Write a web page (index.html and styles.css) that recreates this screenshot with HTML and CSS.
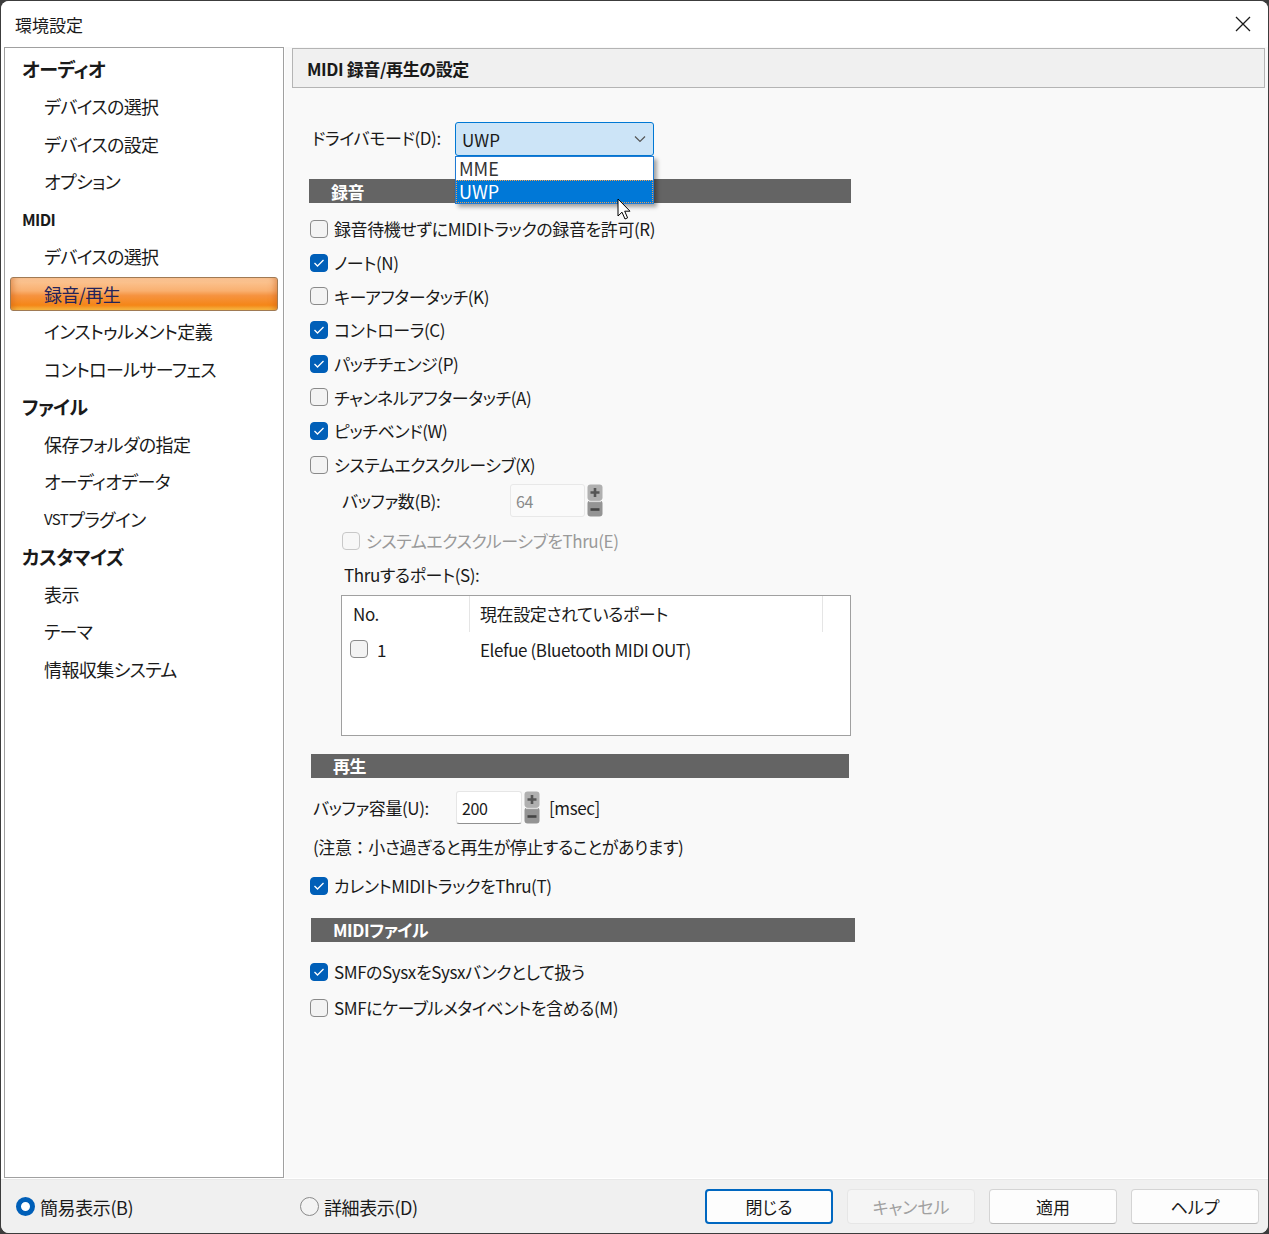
FILE: index.html
```html
<!DOCTYPE html>
<html>
<head>
    <title>環境設定</title>
    <link rel="stylesheet" href="styles.css">
</head>
<body>

<div class="window">
    <div class="titlebar">
        <span class="title">環境設定</span>
        <svg class="close" width="16" height="16" viewBox="0 0 16 16"><path d="M1 1L15 15M15 1L1 15" stroke="#1a1a1a" stroke-width="1.3" fill="none"/></svg>
    </div>

    <div class="main">
        <div class="sidebar">
            <div class="cat">オーディオ</div>
            <div class="item">デバイスの選択</div>
            <div class="item">デバイスの設定</div>
            <div class="item">オプション</div>
            <div class="cat cat-small">MIDI</div>
            <div class="item">デバイスの選択</div>
            <div class="item selected">録音/再生</div>
            <div class="item">インストゥルメント定義</div>
            <div class="item">コントロールサーフェス</div>
            <div class="cat">ファイル</div>
            <div class="item">保存フォルダの指定</div>
            <div class="item">オーディオデータ</div>
            <div class="item"><span class="vst">VST</span>プラグイン</div>
            <div class="cat">カスタマイズ</div>
            <div class="item">表示</div>
            <div class="item">テーマ</div>
            <div class="item">情報収集システム</div>
        </div>

        <div class="panel">
            <div class="panel-head">MIDI 録音/再生の設定</div>

            <div class="body">
                <div class="driver-row">
                    <span class="label">ドライバモード(D):</span>
                    <div class="select">
                        <span>UWP</span>
                        <svg width="12" height="8" viewBox="0 0 12 8"><path d="M1 1.5L6 6.5L11 1.5" stroke="#555" stroke-width="1.2" fill="none"/></svg>
                        <div class="dropdown">
                            <div class="opt">MME</div>
                            <div class="opt active">UWP</div>
                        </div>
                        <svg class="cursor" width="16" height="24" viewBox="0 0 16 24"><path d="M1 1L1 18L5 14.2L8 21L10.6 19.8L7.7 13.2L13 13.2Z" fill="#fff" stroke="#000" stroke-width="1"/></svg>
                    </div>
                </div>

                <div class="bar bar-rec">録音</div>

                <div class="checks">
                    <div class="check"><span class="box"></span>録音待機せずにMIDIトラックの録音を許可(R)</div>
                    <div class="check"><span class="box on"><svg width="12" height="10" viewBox="0 0 12 10"><path d="M1.5 5L4.5 8L10.5 2" stroke="#fff" stroke-width="1.3" fill="none"/></svg></span>ノート(N)</div>
                    <div class="check"><span class="box"></span>キーアフタータッチ(K)</div>
                    <div class="check"><span class="box on"><svg width="12" height="10" viewBox="0 0 12 10"><path d="M1.5 5L4.5 8L10.5 2" stroke="#fff" stroke-width="1.3" fill="none"/></svg></span>コントローラ(C)</div>
                    <div class="check"><span class="box on"><svg width="12" height="10" viewBox="0 0 12 10"><path d="M1.5 5L4.5 8L10.5 2" stroke="#fff" stroke-width="1.3" fill="none"/></svg></span>パッチチェンジ(P)</div>
                    <div class="check"><span class="box"></span>チャンネルアフタータッチ(A)</div>
                    <div class="check"><span class="box on"><svg width="12" height="10" viewBox="0 0 12 10"><path d="M1.5 5L4.5 8L10.5 2" stroke="#fff" stroke-width="1.3" fill="none"/></svg></span>ピッチベンド(W)</div>
                    <div class="check"><span class="box"></span>システムエクスクルーシブ(X)</div>
                </div>

                <div class="sub">
                    <div class="spin-row buf-row">
                        <span class="label buf-label">バッファ数(B):</span>
                        <div class="input disabled">64</div>
                        <svg class="spin" width="16" height="33" viewBox="0 0 16 33">
                            <rect x="0.5" y="0.5" width="15" height="16" rx="3" fill="#b0b0b0"/>
                            <path d="M3.5 8.5H12.5M8 4V13" stroke="#555" stroke-width="2.6"/>
                            <rect x="0.5" y="16.5" width="15" height="16" rx="3" fill="#949494"/>
                            <path d="M2 17.5H14" stroke="#dcdcdc" stroke-width="1.2"/>
                            <path d="M3.5 25.5H12.5" stroke="#444" stroke-width="2.6"/>
                        </svg>
                    </div>
                    <div class="check dim sysx-thru"><span class="box"></span>システムエクスクルーシブをThru(E)</div>
                    <div class="thru-label">Thruするポート(S):</div>
                    <div class="ports">
                        <div class="ports-head">
                            <span class="col-no">No.</span>
                            <span class="col-port">現在設定されているポート</span>
                            <span class="col-end"></span>
                        </div>
                        <div class="ports-row">
                            <span class="col-no"><span class="box"></span>1</span>
                            <span class="col-port">Elefue (Bluetooth MIDI OUT)</span>
                        </div>
                    </div>
                </div>

                <div class="bar bar-play">再生</div>

                <div class="spin-row cap-row">
                    <span class="label cap-label">バッファ容量(U):</span>
                    <div class="input cap-input">200</div>
                    <svg class="spin" width="16" height="33" viewBox="0 0 16 33">
                        <rect x="0.5" y="0.5" width="15" height="16" rx="3" fill="#b0b0b0"/>
                        <path d="M3.5 8.5H12.5M8 4V13" stroke="#555" stroke-width="2.6"/>
                        <rect x="0.5" y="16.5" width="15" height="16" rx="3" fill="#949494"/>
                        <path d="M2 17.5H14" stroke="#dcdcdc" stroke-width="1.2"/>
                        <path d="M3.5 25.5H12.5" stroke="#444" stroke-width="2.6"/>
                    </svg>
                    <span class="unit">[msec]</span>
                </div>
                <div class="note">(注意<span class="wide">：</span>小さ過ぎると再生が停止することがあります)</div>
                <div class="check thru-check"><span class="box on"><svg width="12" height="10" viewBox="0 0 12 10"><path d="M1.5 5L4.5 8L10.5 2" stroke="#fff" stroke-width="1.3" fill="none"/></svg></span>カレントMIDIトラックをThru(T)</div>

                <div class="bar bar-file">MIDIファイル</div>

                <div class="check smf-1"><span class="box on"><svg width="12" height="10" viewBox="0 0 12 10"><path d="M1.5 5L4.5 8L10.5 2" stroke="#fff" stroke-width="1.3" fill="none"/></svg></span>SMFのSysxをSysxバンクとして扱う</div>
                <div class="check smf-2"><span class="box"></span>SMFにケーブルメタイベントを含める(M)</div>
            </div>
        </div>
    </div>

    <div class="footer">
        <div class="radio radio-simple"><span class="dot on"></span>簡易表示(B)</div>
        <div class="radio radio-detail"><span class="dot"></span>詳細表示(D)</div>
        <div class="buttons">
            <button class="focused">閉じる</button>
            <button class="disabled">キャンセル</button>
            <button>適用</button>
            <button>ヘルプ</button>
        </div>
    </div>
</div>

</body>
</html>
```

FILE: styles.css
```css
html, body {
    margin: 0;
    padding: 0;
    background-color: #3c3c3c;
}

body {
    font-family: "Noto Sans CJK JP", "Noto Sans", sans-serif;
    font-feature-settings: "palt";
    color: #1a1a1a;
    font-size: 17px;
    letter-spacing: -0.4px;
}

.window {
    width: 1267px;
    height: 1232px;
    margin: 1px;
    border-radius: 8px;
    overflow: hidden;
    background-color: #f0f0f0;
    display: flex;
    flex-direction: column;
}

.titlebar {
    height: 46px;
    flex: none;
    background-color: #fff;
    display: flex;
    align-items: center;
    justify-content: space-between;
    padding: 0 17px 0 14px;
    letter-spacing: 0;
}

.title {
    font-size: 17px;
}

.main {
    display: flex;
    height: 1132px;
    background-color: #fff;
}

/* sidebar */
.sidebar {
    width: 280px;
    margin-left: 3px;
    border: 1px solid #a0a0a0;
    background-color: #fff;
    padding-top: 2px;
    box-sizing: border-box;
    height: 1131px;
    letter-spacing: -0.6px;
}

.cat, .item {
    height: 37.5px;
    display: flex;
    align-items: center;
    font-size: 18px;
}

.cat {
    padding-left: 17px;
    font-weight: bold;
    font-size: 19px;
}

.cat-small {
    font-size: 16px;
}

.item {
    padding-left: 39px;
}

.vst {
    font-size: 15px;
}

.item.selected {
    height: 33.5px;
    margin: 2px 5px;
    padding-left: 33px;
    border: 1px solid #a07a54;
    border-radius: 3px;
    box-sizing: border-box;
    color: #23235a;
    background: linear-gradient(to bottom, #fcc99a 0%, #f9b070 40%, #f69340 55%, #f58617 85%, #f8c048 100%);
    box-shadow: inset 6px 0 6px -4px rgba(200, 90, 20, 0.5), inset -6px 0 6px -4px rgba(200, 90, 20, 0.5);
}

/* panel */
.panel {
    flex: 1;
    background-color: #f9f9f9;
    margin-left: 1px;
    height: 1131px;
}

.panel-head {
    height: 40px;
    margin: 1px 3px 0 7px;
    box-sizing: border-box;
    border: 1px solid #b4b4b4;
    background-color: #f0f0f0;
    display: flex;
    align-items: center;
    padding-left: 14px;
    font-weight: bold;
    font-size: 17px;
}

.body {
    padding-left: 27px;
}

.label {
    font-size: 17px;
}

.driver-row {
    margin-top: 34px;
    height: 34px;
    display: flex;
    align-items: center;
}

.driver-row .label {
    width: 143px;
    margin-top: -3px;
}

.select {
    position: relative;
    width: 199px;
    height: 34px;
    box-sizing: border-box;
    border: 1px solid #0078d4;
    border-radius: 3px;
    background-color: #cce4f7;
    display: flex;
    align-items: center;
    justify-content: space-between;
    padding: 0 7px 0 6px;
    font-size: 17px;
    letter-spacing: 0;
}

.dropdown {
    position: absolute;
    left: -1px;
    top: 33px;
    width: 199px;
    height: 48px;
    box-sizing: border-box;
    border: 1px solid #1f7ad4;
    background-color: #fff;
    box-shadow: 3px 3px 4px rgba(0, 0, 0, 0.35);
    z-index: 2;
}

.opt {
    height: 23px;
    line-height: 23px;
    padding-left: 3px;
    font-size: 18px;
    color: #333;
}

.opt.active {
    background-color: #0078d7;
    color: #fff;
    outline: 1px dotted #f0a050;
    outline-offset: -1px;
}

.cursor {
    position: absolute;
    left: 161px;
    top: 75px;
    z-index: 3;
}

.bar {
    height: 24px;
    background-color: #646464;
    color: #fff;
    font-weight: bold;
    font-size: 17px;
    display: flex;
    align-items: center;
    padding-left: 22px;
    box-sizing: border-box;
}

.bar-rec {
    margin-top: 23px;
    margin-left: -3px;
    width: 542px;
}

.checks {
    margin-top: 9px;
    margin-left: -2px;
}

.check {
    height: 33.7px;
    display: flex;
    align-items: center;
    font-size: 17px;
}

.box {
    width: 18px;
    height: 18px;
    box-sizing: border-box;
    border: 1px solid #8a8a8a;
    border-radius: 4px;
    background-color: #f3f3f3;
    margin-right: 6px;
    display: inline-flex;
    align-items: center;
    justify-content: center;
    flex: none;
}

.box.on {
    border-color: #005fb8;
    background-color: #005fb8;
}

/* system exclusive sub options */
.sub {
    padding-left: 30px;
}

.spin-row {
    display: flex;
    align-items: center;
    height: 34px;
}

.buf-row {
    margin-top: 2px;
}

.buf-label {
    width: 168px;
}

.input {
    width: 75px;
    height: 33px;
    box-sizing: border-box;
    padding-left: 5px;
    display: flex;
    align-items: center;
    font-size: 16px;
    background-color: #fff;
    border: 1px solid #e6e6e6;
    border-bottom-color: #909090;
    border-radius: 3px;
}

.input.disabled {
    background-color: #fafafa;
    border-color: #e8e8e8;
    color: #8a8a8a;
}

.spin {
    margin-left: 2px;
}

.check.dim {
    color: #9a9a9a;
}

.check.dim .box {
    border-color: #c8c8c8;
    background-color: #f7f7f7;
}

.sysx-thru {
    height: 30px;
    margin-top: 8px;
}

.thru-label {
    height: 30px;
    margin-top: 4px;
    margin-left: 2px;
    display: flex;
    align-items: center;
}

.ports {
    margin-top: 5px;
    margin-left: -1px;
    width: 510px;
    height: 141px;
    box-sizing: border-box;
    border: 1px solid #a0a0a0;
    background-color: #fff;
    font-size: 17px;
}

.ports-head, .ports-row {
    display: flex;
    height: 35px;
    align-items: center;
}

.ports-head {
    height: 36px;
}

.col-no {
    width: 128px;
    box-sizing: border-box;
    padding-left: 11px;
    display: flex;
    align-items: center;
    align-self: stretch;
}

.ports-head .col-no, .ports-head .col-port {
    border-right: 1px solid #e5e5e5;
}

.col-port {
    width: 354px;
    box-sizing: border-box;
    padding-left: 10px;
    display: flex;
    align-items: center;
    align-self: stretch;
}

.ports-head .col-port {
    width: 353px;
}

.ports-row .col-no {
    padding-left: 8px;
}

.ports-row .box {
    margin-right: 9px;
}

.bar-play {
    margin-top: 18px;
    margin-left: -1px;
    width: 538px;
}

.cap-row {
    margin-top: 13px;
}

.cap-label {
    width: 143px;
    margin-left: 1px;
}

.cap-input {
    width: 66px;
    border-color: #e6e6e6;
    border-bottom-color: #909090;
}

.unit {
    margin-left: 9px;
}

.note {
    height: 30px;
    margin-top: 7px;
    margin-left: 1px;
    display: flex;
    align-items: center;
}

.wide {
    font-feature-settings: normal;
}

.thru-check {
    height: 30px;
    margin-top: 9px;
    margin-left: -2px;
}

.bar-file {
    margin-top: 17px;
    margin-left: -1px;
    width: 544px;
}

.smf-1 {
    height: 30px;
    margin-top: 15px;
    margin-left: -2px;
}

.smf-2 {
    height: 30px;
    margin-top: 6px;
    margin-left: -2px;
}

/* footer */
.footer {
    flex: 1;
    display: flex;
    align-items: center;
    background-color: #f0f0f0;
    padding-left: 15px;
    font-size: 18px;
    border-top: 1px solid #e8e8e8;
}

.radio {
    display: flex;
    align-items: center;
}

.radio-simple {
    width: 284px;
}

.dot {
    width: 19px;
    height: 19px;
    border-radius: 50%;
    box-sizing: border-box;
    border: 1px solid #8a8a8a;
    background-color: #f3f3f3;
    margin-right: 5px;
}

.dot.on {
    border: 5px solid #005fb8;
    background-color: #fff;
}

.buttons {
    margin-left: auto;
    margin-right: 9px;
    display: flex;
    gap: 14px;
}

button {
    width: 128px;
    height: 35px;
    font-family: inherit;
    font-feature-settings: "palt";
    font-size: 17px;
    color: #1a1a1a;
    background-color: #fdfdfd;
    border: 1px solid #d4d4d4;
    border-bottom-color: #b8b8b8;
    border-radius: 4px;
}

button.focused {
    border: 2px solid #0067c0;
}

button.disabled {
    background-color: #f5f5f5;
    border-color: #e6e6e6;
    color: #a0a0a0;
}
```
